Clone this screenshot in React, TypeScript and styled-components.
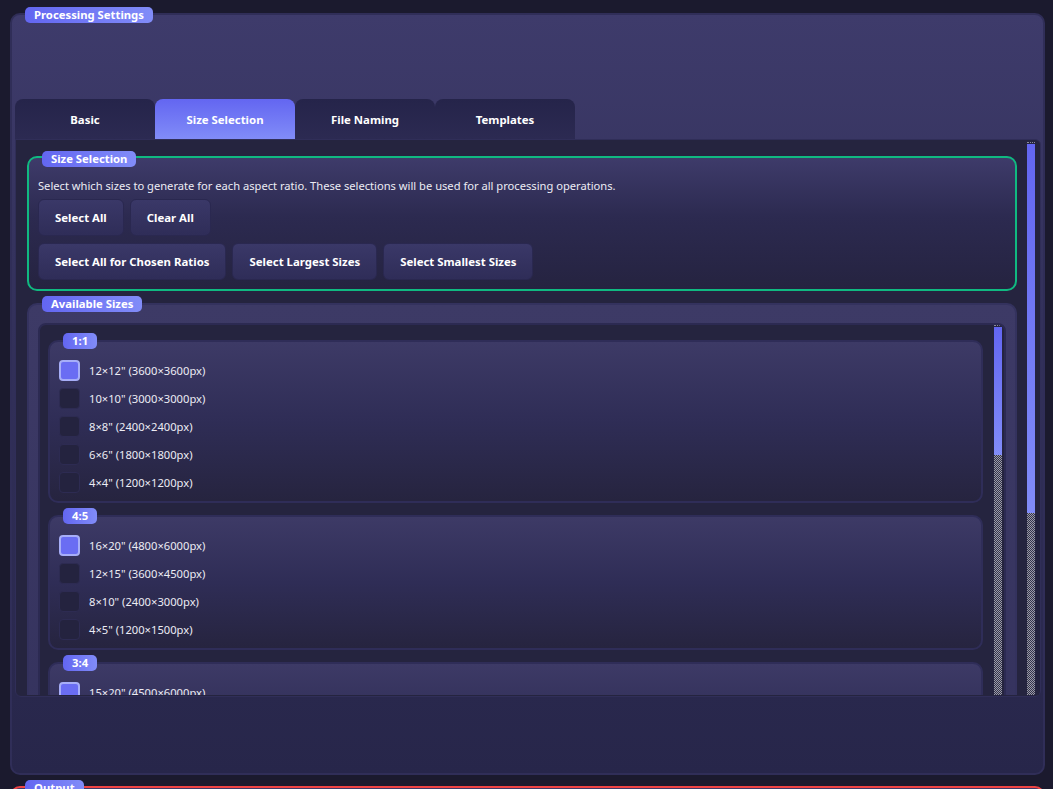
import React from "react";
import styled, { createGlobalStyle } from "styled-components";

const GlobalStyle = createGlobalStyle`
  html, body { margin: 0; padding: 0; overflow: hidden; }
  body {
    background: #1b1a2e;
    font-family: "Noto Sans", "Open Sans", sans-serif;
    color: #e8e8f2;
  }
  * { box-sizing: border-box; }
`;

const Page = styled.div`
  padding: 13px 8px 0 10px;
  height: 789px;
  overflow: hidden;
`;

const Group = styled.section<{ $border: string; $radius?: number }>`
  position: relative;
  border: 2px solid ${(p) => p.$border};
  border-radius: ${(p) => p.$radius ?? 10}px;
  background: linear-gradient(180deg, #3e3b6a 0%, #2c2a50 45%, #252340 100%);
`;

const Badge = styled.span<{ $top?: number }>`
  position: absolute;
  top: ${(p) => p.$top ?? -8}px;
  left: 13px;
  height: 16px;
  line-height: 16px;
  padding: 0 9px;
  border-radius: 5px;
  background: linear-gradient(90deg, #6366f1 0%, #818cf8 100%);
  color: #ffffff;
  font-size: 11.3px;
  font-weight: 700;
  white-space: nowrap;
`;

const OuterGroup = styled(Group)`
  height: 762px;
  padding: 84px 2px 76px 3px;
  background: linear-gradient(180deg, #3e3b6b 0%, #35335e 30%, #27264a 100%);
`;

const TabBar = styled.div`
  display: flex;
  height: 40px;
`;

const Tab = styled.div<{ $active?: boolean }>`
  width: 140px;
  height: 40px;
  display: flex;
  align-items: center;
  justify-content: center;
  border-radius: 8px 8px 0 0;
  font-size: 11.4px;
  font-weight: 700;
  color: #ffffff;
  background: ${(p) =>
    p.$active
      ? "linear-gradient(180deg, #6366f1 0%, #818cf8 100%)"
      : "linear-gradient(180deg, #25244a 0%, #2c2a52 100%)"};
`;

const TabPane = styled.div`
  height: 558px;
  border: 1px solid #302e58;
  border-radius: 0 6px 6px 6px;
  background: #25243f;
  padding: 2px 1px 1px 2px;
`;

const ScrollArea = styled.div<{ $height?: number }>`
  display: flex;
  height: ${(p) => (p.$height ? `${p.$height}px` : "100%")};
  overflow: hidden;
  background: #25243f;
`;

const OuterContent = styled.div`
  width: 990px;
  margin-left: 9px;
  margin-right: 10px;
  padding-top: 14px;
  display: flex;
  flex-direction: column;
  gap: 12px;
`;

const Bar = styled.div<{ $right: number }>`
  width: 8px;
  margin-right: ${(p) => p.$right}px;
  display: flex;
  flex-direction: column;
  flex-shrink: 0;
`;

const BarCap = styled.div`
  height: 2px;
  border-top: 1px dotted #8c8c9c;
`;

const BarHandle = styled.div`
  background: linear-gradient(180deg, #6366f1 0%, #818cf8 100%);
`;

const BarTrack = styled.div`
  flex: 1;
  background: repeating-conic-gradient(#9a9aa8 0% 25%, #34344a 0% 50%) 0 0 / 2px 2px;
`;

const ScrollBar = ({ handle, right }: { handle: number; right: number }) => (
  <Bar $right={right}>
    <BarCap />
    <BarHandle style={{ height: handle }} />
    <BarTrack />
  </Bar>
);

const SelectionGroup = styled(Group)`
  height: 135px;
  padding: 20px 9px 0 9px;
  flex-shrink: 0;
`;

const Description = styled.p`
  margin: 0 0 5px 0;
  font-size: 11.15px;
  line-height: 16px;
  color: #ececf4;
`;

const ButtonRow = styled.div`
  display: flex;
  gap: 6px;
  & + & { margin-top: 7px; }
`;

const Button = styled.button`
  height: 37px;
  padding: 0 16px;
  border: 1px solid #2a2850;
  border-radius: 6px;
  background: linear-gradient(180deg, #3a3868 0%, #2f2d58 100%);
  color: #ffffff;
  font-family: inherit;
  font-size: 11.4px;
  font-weight: 700;
`;

const SizesGroup = styled(Group)`
  padding: 18px 9px 0 9px;
  flex-shrink: 0;
  background: linear-gradient(180deg, #3d3a66 0%, #33315c 100%);
`;

const InnerScroll = styled(ScrollArea)`
  border: 2px solid #2c2a52;
  border-radius: 8px;
`;

const InnerContent = styled.div`
  flex: 1;
  padding: 15px 11px 0 8px;
  display: flex;
  flex-direction: column;
  gap: 12px;
`;

const RatioGroup = styled(Group)`
  padding: 18px 9px 8px 9px;
  display: flex;
  flex-direction: column;
  gap: 7px;
  background: linear-gradient(180deg, #3d3a66 0%, #2f2d56 50%, #26243f 100%);
`;

const Row = styled.label`
  display: flex;
  align-items: center;
  gap: 9px;
  height: 21px;
  font-size: 11.2px;
  color: #ececf4;
`;

const Check = styled.span<{ $on?: boolean }>`
  width: 21px;
  height: 21px;
  border-radius: 4px;
  flex-shrink: 0;
  background: ${(p) => (p.$on ? "#6a6df3" : "#24233f")};
  border: ${(p) => (p.$on ? "2px solid #a7aef8" : "1px solid #2d2b52")};
`;

const OutputGroup = styled(Group)`
  margin-top: 11px;
  height: 200px;
`;

const ratios: { name: string; sizes: string[] }[] = [
  {
    name: "1:1",
    sizes: [
      "12×12\" (3600×3600px)",
      "10×10\" (3000×3000px)",
      "8×8\" (2400×2400px)",
      "6×6\" (1800×1800px)",
      "4×4\" (1200×1200px)",
    ],
  },
  {
    name: "4:5",
    sizes: [
      "16×20\" (4800×6000px)",
      "12×15\" (3600×4500px)",
      "8×10\" (2400×3000px)",
      "4×5\" (1200×1500px)",
    ],
  },
  {
    name: "3:4",
    sizes: [
      "15×20\" (4500×6000px)",
      "12×16\" (3600×4800px)",
      "9×12\" (2700×3600px)",
      "6×8\" (1800×2400px)",
    ],
  },
];

export default function App() {
  return (
    <>
      <GlobalStyle />
      <Page>
        <OuterGroup $border="#302e58">
          <Badge $top={-8}>Processing Settings</Badge>
          <TabBar>
            <Tab>Basic</Tab>
            <Tab $active>Size Selection</Tab>
            <Tab>File Naming</Tab>
            <Tab>Templates</Tab>
          </TabBar>
          <TabPane>
            <ScrollArea $height={553}>
              <OuterContent>
                <SelectionGroup $border="#10b981">
                  <Badge $top={-7}>Size Selection</Badge>
                  <Description>
                    Select which sizes to generate for each aspect ratio. These selections will be used for all processing operations.
                  </Description>
                  <ButtonRow>
                    <Button>Select All</Button>
                    <Button>Clear All</Button>
                  </ButtonRow>
                  <ButtonRow>
                    <Button>Select All for Chosen Ratios</Button>
                    <Button>Select Largest Sizes</Button>
                    <Button>Select Smallest Sizes</Button>
                  </ButtonRow>
                </SelectionGroup>
                <SizesGroup $border="#34325e">
                  <Badge $top={-9}>Available Sizes</Badge>
                  <InnerScroll $height={520}>
                    <InnerContent>
                      {ratios.map((r) => (
                        <RatioGroup key={r.name} $border="#2f2d58">
                          <Badge $top={-9}>{r.name}</Badge>
                          {r.sizes.map((s, i) => (
                            <Row key={s}>
                              <Check $on={i === 0} />
                              {s}
                            </Row>
                          ))}
                        </RatioGroup>
                      ))}
                    </InnerContent>
                    <ScrollBar handle={128} right={2} />
                  </InnerScroll>
                </SizesGroup>
              </OuterContent>
              <ScrollBar handle={369} right={4} />
            </ScrollArea>
          </TabPane>
        </OuterGroup>
        <OutputGroup $border="#ef4444">
          <Badge $top={-8}>Output</Badge>
        </OutputGroup>
      </Page>
    </>
  );
}
